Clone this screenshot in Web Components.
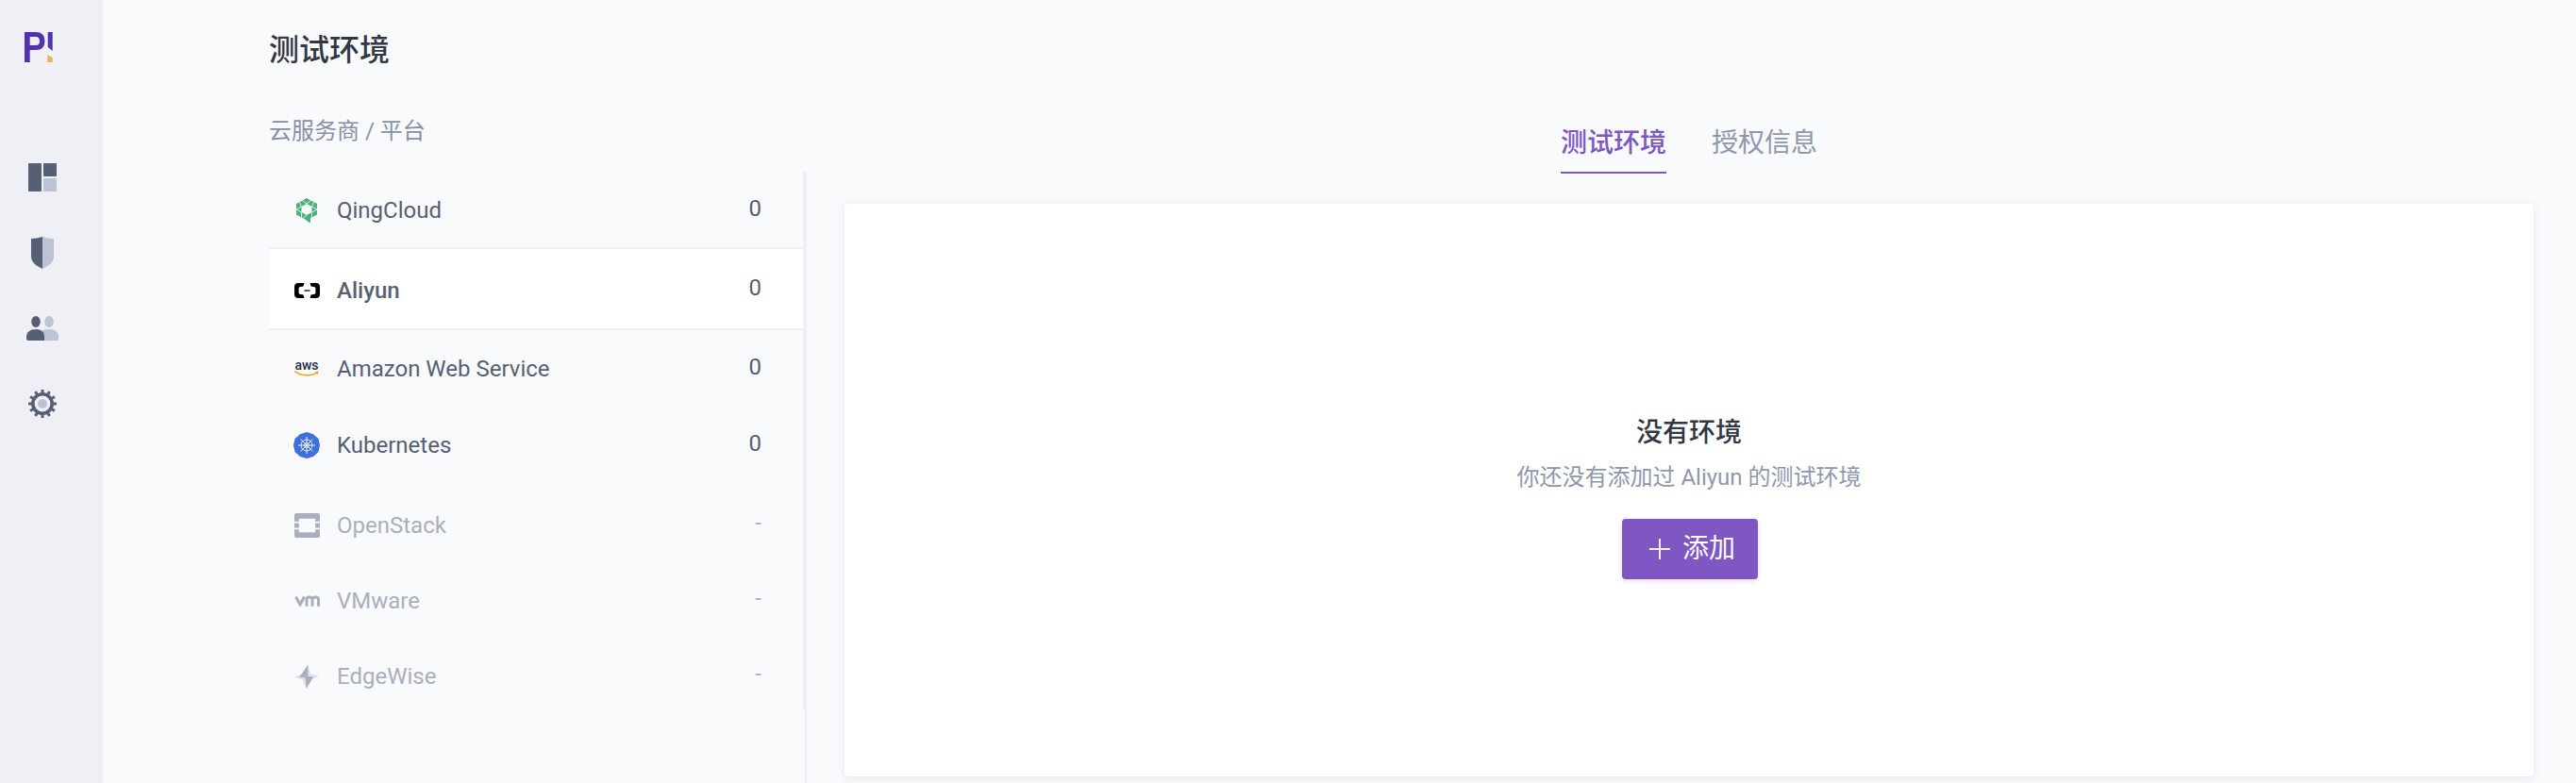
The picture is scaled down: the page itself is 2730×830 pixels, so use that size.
<!DOCTYPE html>
<html><head><meta charset="utf-8"><style>
html,body{margin:0;padding:0;height:830px;overflow:hidden;background:#f9fafc;font-family:Roboto,"Noto Sans CJK SC",sans-serif}
</style></head><body>
<app-shell>
<side-nav slot="nav"></side-nav>
<page-head slot="head" title="测试环境"></page-head>
<provider-list slot="list"></provider-list>
<tab-bar slot="tabs"></tab-bar>
<empty-card slot="card"></empty-card>
</app-shell>
<script>
const F='Roboto,"Noto Sans CJK SC",sans-serif';
const def=(name,html)=>customElements.define(name,class extends HTMLElement{connectedCallback(){if(this.shadowRoot)return;const s=this.attachShadow({mode:'open'});s.innerHTML=html(this);}});
def('app-shell',()=>`<style>
:host{display:flex;width:2730px;height:830px;overflow:hidden}
.nav{width:109px;flex:none}
.main{flex:1;display:flex;flex-direction:column;padding:0 45px 0 176px;min-width:0}
.body{flex:1;display:flex;min-height:0}
.left{width:568px;flex:none;display:flex;flex-direction:column}
.right{flex:1;display:flex;flex-direction:column;padding-left:40px;border-left:2px solid #eff0f6;min-width:0}
</style>
<div class="nav"><slot name="nav"></slot></div>
<div class="main"><slot name="head"></slot>
<div class="body"><div class="left"><slot name="list"></slot></div>
<div class="right"><slot name="tabs"></slot><slot name="card"></slot></div></div></div>`);
const ICONS={
dash:`<svg width="30" height="30" viewBox="0 0 30 30"><rect width="14" height="30" rx="1" fill="#575f75"/><rect x="16" width="14" height="14" rx="1" fill="#575f75"/><rect x="16" y="16" width="14" height="14" rx="1" fill="#bcc3d2"/></svg>`,
shield:`<svg width="24" height="34" viewBox="0 0 24 34"><path d="M12 0C8 1 4 2 0 2V21C0 27 6 31 12 34Z" fill="#575f75"/><path d="M12 0C16 1 20 2 24 2V21C24 27 18 31 12 34Z" fill="#bcc3d2"/></svg>`,
users:`<svg width="34" height="26" viewBox="0 0 34 26"><ellipse cx="24" cy="6" rx="4.800" ry="6" fill="#bcc3d2"/><path d="M17 15C19 14 21 14 24 14C30 14 34 17 34 21V25Q34 26 32 26H17Z" fill="#bcc3d2"/><ellipse cx="10" cy="6" rx="4.800" ry="6" fill="#575f75"/><path d="M0 22C0 17 4 14 10 14C16 14 19 17 19 22V26H2Q0 26 0 24Z" fill="#575f75"/></svg>`,
gear:`<svg width="30" height="30" viewBox="0 0 30 30"><circle cx="15" cy="15" r="10.200" fill="none" stroke="#575f75" stroke-width="3.600"/><g fill="#575f75">${[0,30,60,90,120,150,180,210,240,270,300,330].map(a=>`<rect x="13.500" y="0" width="3" height="6" rx=".5" transform="rotate(${a} 15 15)"/>`).join('')}</g><circle cx="15" cy="15" r="5" fill="#bcc3d2"/></svg>`,
qing:`<svg width="22" height="26" viewBox="0 0 22 26"><path fill="#4fb07c" fill-rule="evenodd" d="M11 0L22 6V17.500L11 23.500 0 17.500V6ZM11 6L5.500 9V15L11 18 16.500 15V9Z"/><path fill="#4fb07c" d="M8 21L15 19.500V26L13 25.500Z"/><path fill="none" stroke="#f9fafc" stroke-width=".8" d="M11 6L5.500 1.500M11 6L16.500 1.500M5.500 9L3 3.500M16.500 9L19 3.500M5.500 9L0 12M16.500 9L22 12M5.500 15L0 12M16.500 15L22 12M5.500 15L5.500 21M16.500 15L16.500 21M11 18L7 21.500"/></svg>`,
ali:`<svg width="27" height="16" viewBox="0 0 27 16"><path d="M10.500 0H4Q0 0 0 4V12Q0 16 4 16H10.500L9.500 12.500 5.500 11.700Q4.600 11.400 4.600 10.500V5.500Q4.600 4.600 5.500 4.300L9.500 3.500ZM16.500 0H23Q27 0 27 4V12Q27 16 23 16H16.500L17.500 12.500 21.500 11.700Q22.400 11.400 22.400 10.500V5.500Q22.400 4.600 21.500 4.300L17.500 3.500Z" fill="#000"/><rect x="10.500" y="7.400" width="6" height="1.300" fill="#000"/></svg>`,
aws:`<svg width="28" height="26" viewBox="0 0 28 26"><text x="14" y="14" text-anchor="middle" font-family="Roboto,sans-serif" font-size="14" font-weight="500" fill="#252f3e">aws</text><path d="M1.500 15.500C8 21 20 21 25.500 16.500" fill="none" stroke="#f90" stroke-width="1.500"/><path d="M23 16L26.500 15.500 25.500 19Z" fill="#f90"/></svg>`,
k8s:`<svg width="28" height="28" viewBox="0 0 28 28"><path d="M14 0L21 2.200 26.500 7 28 14 26.500 21 21 26 14 28 7 26 1.500 21 0 14 1.500 7 7 2.200Z" fill="#3f6fdc"/><g stroke="#e6edfb" stroke-width="1" fill="none"><circle cx="14" cy="14" r="6"/><circle cx="14" cy="14" r="2.500"/><path d="M14 5V23M5 14H23M7.600 7.600L20.400 20.400M20.400 7.600L7.600 20.400"/></g></svg>`,
open:`<svg width="27" height="26" viewBox="0 0 28 27"><path d="M2 0H26Q28 0 28 2V9H23V6H5V9H0V2Q0 0 2 0ZM0 11H5V16H0ZM23 11H28V16H23ZM0 18H5V21H23V18H28V25Q28 27 26 27H2Q0 27 0 25Z" fill="#a9afbc"/></svg>`,
vm:`<svg width="27" height="12" viewBox="0 0 27 12"><path d="M1.500 1.500L6 10 10.500 1.500M13 11.700V4.500Q13 2 15.500 2Q19 2 19 4.500V11.700M19 4.500Q19 2 22 2Q25.500 2 25.500 4.500V11.700" fill="none" stroke="#a9afbc" stroke-width="3"/></svg>`,
edge:`<svg width="26" height="25" viewBox="0 0 26 25"><path d="M0 12.700L9 9 14.300 0 17 9 26 12 17 15.500 12.700 25 9 15.500Z" fill="#dcdfe7"/><path d="M14.300 0L5.300 12.700 11.600 13.300 12.700 25 20 12.700 14.300 11.700Z" fill="#a9afbc"/></svg>`
};
def('nav-icon',h=>`<style>:host{display:flex;height:80px;width:90px;align-items:center;justify-content:center}svg{display:block}</style>${ICONS[h.getAttribute('icon')]}`);
def('side-nav',()=>`<style>
:host{display:block;width:109px;height:830px;background:#eff0f6}
.logo{height:148px;padding:33px 0 0 26px;box-sizing:border-box}
.logo svg{display:block}
.items{display:flex;flex-direction:column}
</style>
<div class="logo"><svg width="30" height="33" viewBox="0 0 30 33" aria-label="logo"><path fill="#5233ad" d="M0 1H12Q21.500 1 21.500 10.500Q21.500 20 12 20H5.700V33H0ZM5.700 6V15H12Q16 15 16 10.500Q16 6 12 6ZM24.700 1H29.700V21L24.700 17Z"/><path fill="#e9b35c" d="M24.300 25L29.700 28V33H24.300Z"/></svg></div>
<div class="items"><nav-icon icon="dash"></nav-icon><nav-icon icon="shield"></nav-icon><nav-icon icon="users"></nav-icon><nav-icon icon="gear"></nav-icon></div>`);
def('page-head',h=>`<style>
:host{display:block;height:182px;box-sizing:border-box;padding-top:29px}
h1{margin:0;font:500 32px/48px ${F};color:#323744}
p{margin:46px 0 0;font:400 24px/32px ${F};color:#8890a7}
</style><h1>${h.getAttribute('title')}</h1><p>云服务商 / 平台</p>`);
def('provider-row',h=>`<style>
:host{display:flex;align-items:center;box-sizing:border-box;height:var(--h,82px);padding:2px 44px 0 26px;font:400 24px/32px ${F};color:#575f75}
:host([active]){background:#fff;font-weight:500;border-top:2px solid #eff0f6;border-bottom:2px solid #eff0f6;padding-top:4px}
:host([off]){color:#a9afbc}
.i{width:28px;display:flex;justify-content:center;margin-right:18px}svg{display:block}
.n{flex:1}.c{font-weight:400;margin-bottom:4px}
:host([active]) .c{margin-bottom:6px}
:host([off]) .c{margin-bottom:6px}
</style><span class="i">${ICONS[h.getAttribute('icon')]}</span><span class="n">${h.getAttribute('name')}</span><span class="c">${h.getAttribute('count')}</span>`);
def('provider-list',()=>`<style>
:host{display:block;width:570px;height:570px;border-right:4px solid #eff0f6;box-sizing:border-box}
</style>
<provider-row style="--h:80px" icon="qing" name="QingCloud" count="0"></provider-row>
<provider-row style="--h:88px" icon="ali" name="Aliyun" count="0" active></provider-row>
<provider-row style="--h:80px" icon="aws" name="Amazon Web Service" count="0"></provider-row>
<provider-row style="--h:82px" icon="k8s" name="Kubernetes" count="0"></provider-row>
<provider-row style="--h:88px" icon="open" name="OpenStack" count="-" off></provider-row>
<provider-row style="--h:72px" icon="vm" name="VMware" count="-" off></provider-row>
<provider-row style="--h:88px" icon="edge" name="EdgeWise" count="-" off></provider-row>`);
def('tab-bar',()=>`<style>
:host{display:flex;justify-content:center;gap:48px;height:216px;margin-top:-182px;box-sizing:border-box;padding-top:132px;font:400 28px/40px ${F};color:#8f97ad}
span{height:52px;box-sizing:border-box}
.on{color:#7e57c2;font-weight:500;border-bottom:2px solid #7e57c2}
</style><span class="on">测试环境</span><span>授权信息</span>`);
def('empty-card',()=>`<style>
:host{display:flex;flex-direction:column;align-items:center;height:607px;background:#fff;border-radius:4px;box-shadow:0 2px 10px rgba(60,65,90,.1);box-sizing:border-box;padding-top:223px}
h2{margin:0;font:500 28px/40px ${F};color:#323744}
p{margin:9px 0 26px;font:400 24px/36px ${F};color:#8f97ad}
button{all:unset;box-sizing:border-box;display:flex;align-items:center;justify-content:center;gap:12px;width:144px;height:64px;margin-left:2px;padding-left:4px;background:#7e57c2;border-radius:4px;color:#fff;font:400 28px/40px ${F};box-shadow:0 2px 6px rgba(126,87,194,.2)}
svg{display:block}
</style><h2>没有环境</h2><p>你还没有添加过 Aliyun 的测试环境</p><button><svg width="24" height="24" viewBox="0 0 24 24"><path d="M12 1V23M1 12H23" stroke="#f3effa" stroke-width="2"/></svg>添加</button>`);
</script>
</body></html>
